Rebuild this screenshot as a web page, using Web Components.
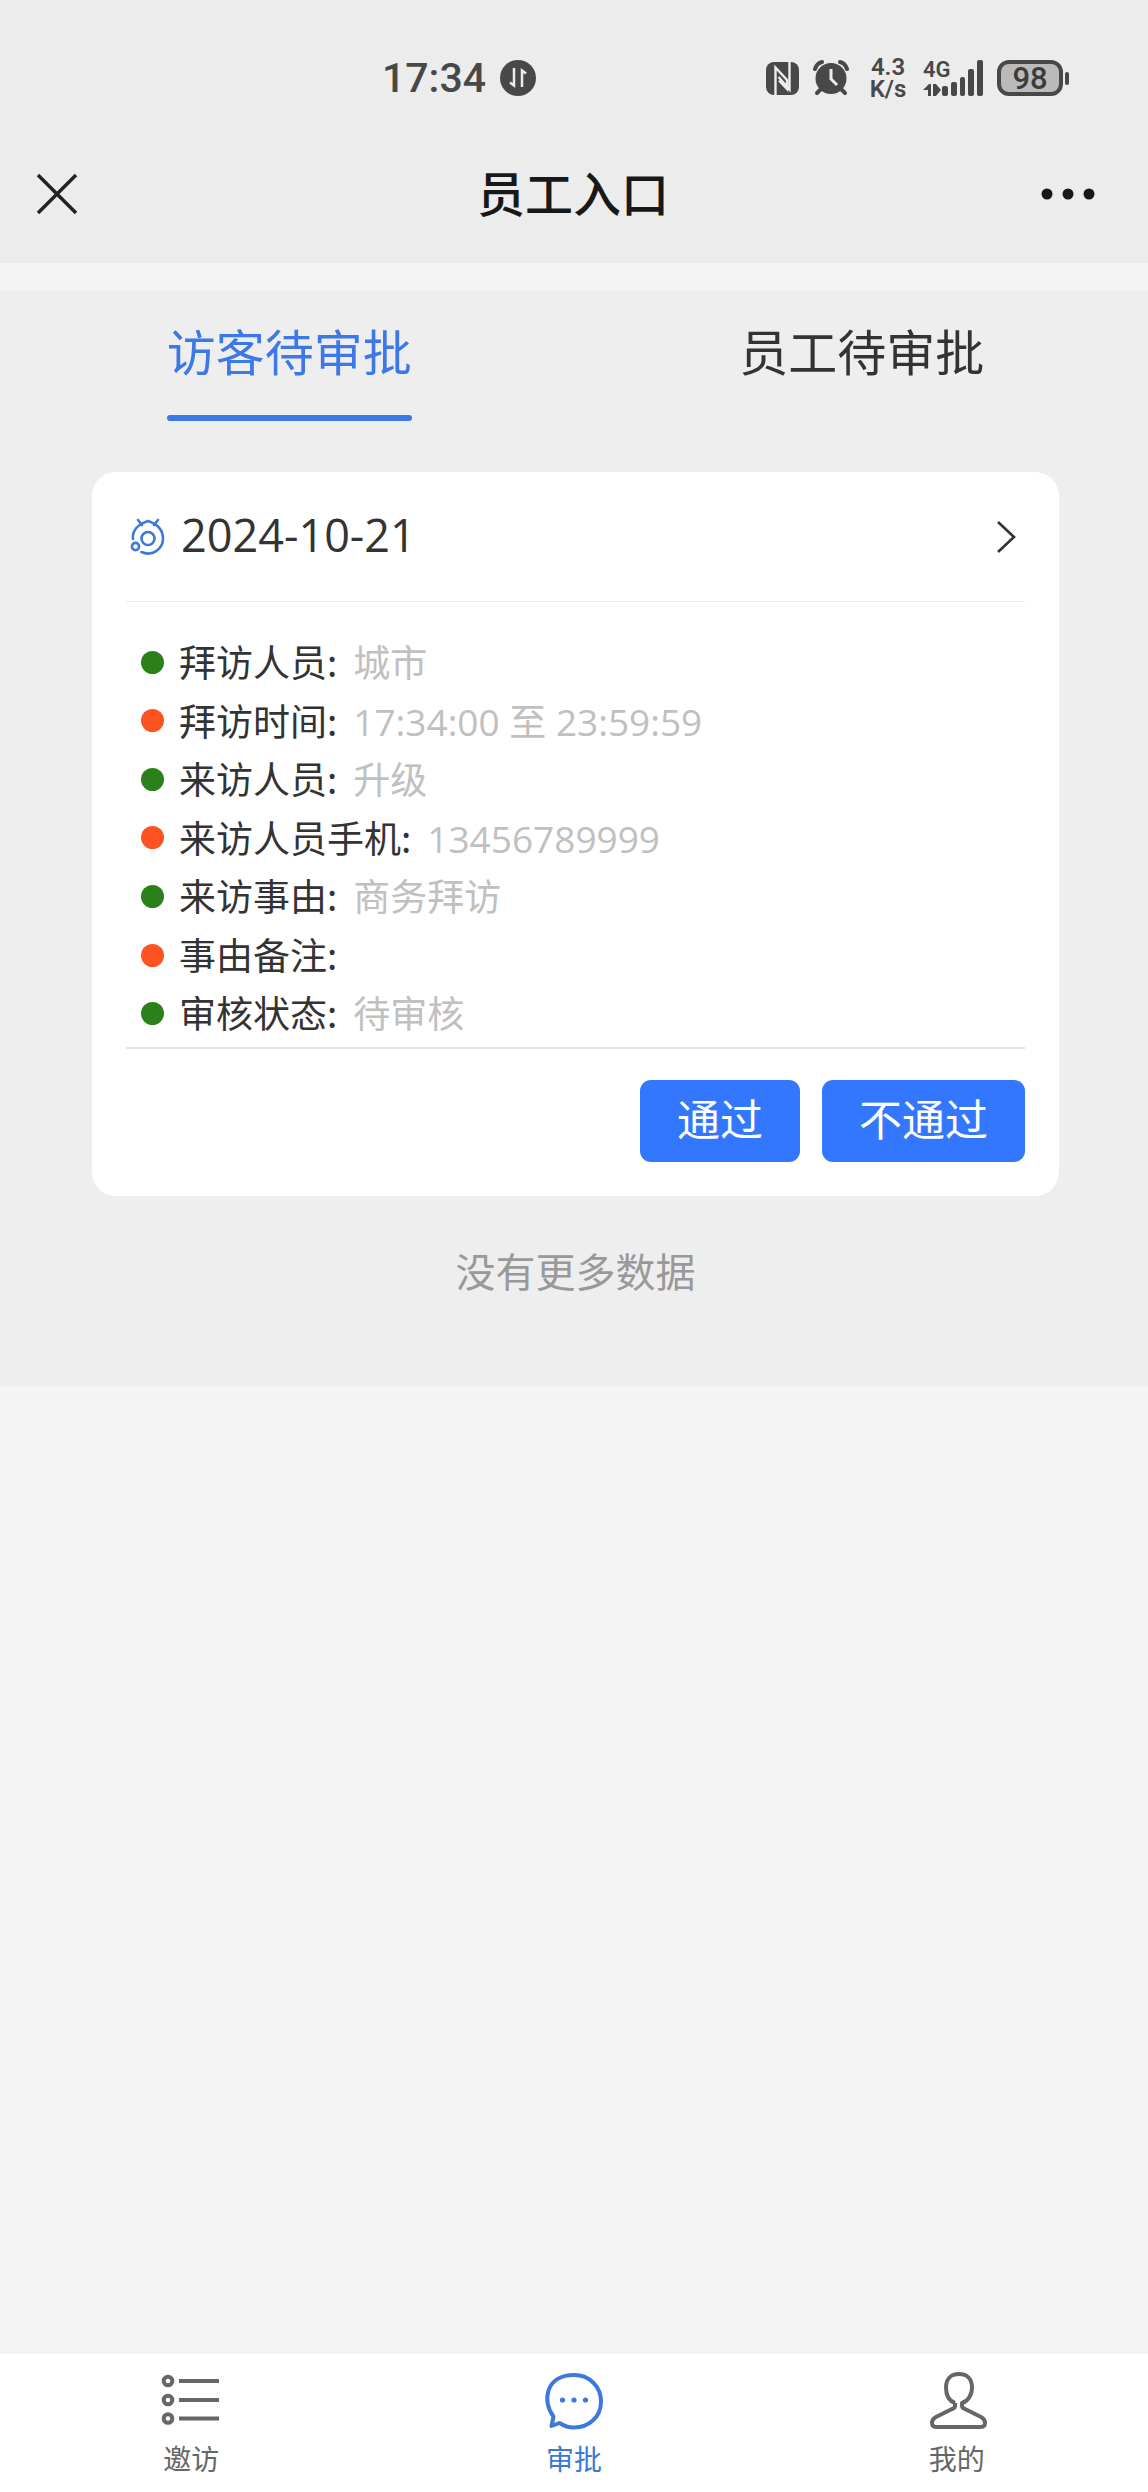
<!DOCTYPE html>
<html lang="zh-CN">
<head>
<meta charset="utf-8">
<meta name="viewport" content="width=device-width, initial-scale=1">
<title>员工入口</title>
<style>
  html, body { margin: 0; min-height: 100%; }
  body { background: #f4f4f4; font-family: "Noto Sans CJK SC", "Noto Sans", sans-serif; color: #333; }
</style>
</head>
<body>
<visitor-app></visitor-app>

<script>
const define = (name, html, setup) => {
  const template = document.createElement('template');
  template.innerHTML = html;
  customElements.define(name, class extends HTMLElement {
    constructor() {
      super();
      this.attachShadow({ mode: 'open' }).append(template.content.cloneNode(true));
    }
    connectedCallback() { if (setup) setup(this, this.shadowRoot); }
  });
};

define('status-bar', `
<style>
  :host { display: flex; justify-content: space-between; align-items: center; height: 156px; box-sizing: border-box;
    padding: 0 79px 0 382px; background: #ececec; color: #484848; font-family: Roboto, sans-serif; font-weight: 500; }
  .left, .right { display: flex; align-items: center; }
  .left { gap: 14px; }
  .clock { font-size: 41px; line-height: 48px; }
  svg { display: block; }
  .alarm { margin-left: 14px; }
  .speed { margin-left: 18px; width: 42px; text-align: center; font-size: 24px; line-height: 22px; font-weight: 600; }
  .signal { margin-left: 14px; }
  .battery { margin-left: 14px; width: 66px; height: 36px; box-sizing: border-box; border: 4px solid #484848; border-radius: 12px;
    background: #bababa; font-size: 31px; line-height: 29px; text-align: center; color: #3c3c3c; }
  .nub { margin-left: 2px; width: 4px; height: 13px; border-radius: 2px; background: #484848; }
</style>
<div class="left">
  <span class="clock">17:34</span>
  <svg width="36" height="36" viewBox="0 0 36 36"><circle cx="18" cy="18" r="18" fill="#484848"/><path d="M14 8v17.500l-4-3M22 27V10.500l4 3" fill="none" stroke="#ececec" stroke-width="2.500"/></svg>
</div>
<div class="right">
  <svg width="33" height="33" viewBox="0 0 33 33"><rect width="33" height="33" rx="8" fill="#484848"/><path d="M9.500 33V5.500L21 18v9l-8-8.500M23.500 0v27.500L12.500 15" fill="none" stroke="#ececec" stroke-width="2.400"/></svg>
  <svg class="alarm" width="36" height="36" viewBox="0 0 36 36"><g fill="none" stroke="#484848" stroke-width="4" stroke-linecap="round"><path d="M2 9Q4 3 9 2M34 9Q32 3 27 2" /><path d="M8 29l-4 4M28 29l4 4"/></g><circle cx="18" cy="18.500" r="15.500" fill="#484848"/><path d="M18 9v10l6 6" fill="none" stroke="#ececec" stroke-width="3"/></svg>
  <div class="speed"><div>4.3</div><div>K/s</div></div>
  <svg class="signal" width="60" height="56" viewBox="0 -10 60 56"><g fill="#484848"><text x="0" y="17" font-size="22" font-weight="600" font-family="Roboto">4G</text><path d="M0 30l6-6h2v12H5v-6zM10 24h3l5 6-5 6h-3z"/><rect x="19" y="26" width="6" height="10" rx="2"/><rect x="28" y="22" width="6" height="14" rx="2"/><rect x="37" y="17" width="5" height="19" rx="2"/><rect x="45" y="9" width="6" height="27" rx="2"/><rect x="54" y="0" width="6" height="36" rx="2"/></g></svg>
  <div class="battery">98</div><div class="nub"></div>
</div>`);

define('nav-header', `
<style>
  :host { display: flex; align-items: center; justify-content: space-between; height: 107px; box-sizing: border-box;
    padding: 0 48px 31px 32px; background: #ececec; color: #181818; }
  .side { flex: 1; display: flex; }
  .end { justify-content: flex-end; }
  h1 { margin: 0; font-size: 48px; line-height: 64px; font-weight: 500; padding: 0 0 6px 14px; }
  button { all: unset; display: block; cursor: pointer; }
  svg { display: block; }
</style>
<div class="side"><button aria-label="关闭"><svg width="50" height="50" viewBox="0 0 50 50"><path d="M6 6l38 38M44 6L6 44" stroke="#222" stroke-width="3.500" fill="none"/></svg></button></div>
<h1><slot></slot></h1>
<div class="side end"><button aria-label="更多"><svg width="62" height="40" viewBox="0 0 62 40"><g fill="#181818"><circle cx="9" cy="20" r="5.500"/><circle cx="30" cy="20" r="5.500"/><circle cx="51" cy="20" r="5.500"/></g></svg></button></div>`);

define('tab-item', `
<style>
  :host { flex: 1; display: flex; justify-content: center; }
  button { all: unset; cursor: pointer; box-sizing: border-box; height: 130px; padding-top: 24px; font-size: 49px; line-height: 70px; color: #333; }
  span { display: block; }
  i { display: block; height: 6px; border-radius: 3px; margin-top: 30px; }
  :host([active]) button { color: #3c78e8; }
  :host([active]) i { background: #3c78e8; }
</style>
<button role="tab"><span><slot></slot></span><i></i></button>`);

define('info-row', `
<style>
  :host { display: flex; align-items: baseline; font-size: 37px; line-height: 56px; --dot: #2c8019; }
  :host([tone="orange"]) { --dot: #fd5320; }
  i { align-self: center; width: 23px; height: 23px; border-radius: 50%; background: var(--dot); margin-right: 15px; }
  .value { color: #c0c0c0; margin-left: 16px; font-family: "Open Sans", "Noto Sans CJK SC", sans-serif; }
</style>
<i></i><span class="label"></span><span class="value"><slot></slot></span>`,
(host, root) => { root.querySelector('.label').textContent = host.getAttribute('label') + ':'; });

define('action-button', `
<style>
  :host { display: block; }
  button { display: block; border: 0; margin: 0; border-radius: 11px; background: #3477ff; color: #fff; font: inherit;
    font-size: 43px; line-height: 62px; padding: 6px 37px 14px; cursor: pointer; }
</style>
<button type="button"><slot></slot></button>`);

define('visit-card', `
<style>
  :host { display: block; background: #fff; border-radius: 24px; padding: 0 34px 34px; }
  header { display: flex; align-items: center; height: 130px; box-sizing: border-box; border-bottom: 1px solid #ebebeb; padding: 0 9px 0 4px; }
  .date { flex: 1; margin-left: 15px; padding-bottom: 4px; font-family: "Open Sans", sans-serif; font-size: 45px; line-height: 60px; }
  svg { display: block; }
  .rows { display: grid; grid-auto-rows: 1fr; min-height: 410px; padding: 31px 0 4px 15px; border-bottom: 2px solid #e3e3e3; }
  footer { display: flex; justify-content: flex-end; gap: 22px; padding-top: 31px; }
</style>
<header>
  <svg width="36" height="38" viewBox="0 0 36 38"><g fill="none" stroke="#3c78e0" stroke-width="2.600" stroke-linecap="round"><circle cx="18" cy="20.500" r="6.500"/><circle cx="5.500" cy="28.500" r="3.600"/><path d="M3 21C2 12 9 6 18 3C27 6 33 12 33 20.500C33 31 22 39 11.500 34"/><path d="M8 2l4 5M28 2l-4 5"/></g></svg>
  <span class="date"></span>
  <svg width="20" height="32" viewBox="0 0 20 32"><path d="M2 1l16 15L2 31" fill="none" stroke="#333" stroke-width="2.600"/></svg>
</header>
<div class="rows"><slot></slot></div>
<footer><slot name="actions"></slot></footer>`,
(host, root) => { root.querySelector('.date').textContent = host.getAttribute('date'); });

define('bottom-item', `
<style>
  :host { flex: 1; color: #666; }
  :host([active]) { color: #3c78d8; }
  a { display: flex; flex-direction: column; align-items: center; color: inherit; text-decoration: none; font-size: 28px; line-height: 40px; padding-top: 16px; gap: 8px; }
</style>
<a href="#"><slot name="icon"></slot><span><slot></slot></span></a>`);

define('visitor-app', `
<style>
  :host { display: flex; flex-direction: column; min-height: 100vh; }
  .tabs { display: flex; padding-left: 3px; }
  main { margin-top: 28px; background: #eee; padding-bottom: 86px; }
  visit-card { margin: 51px 89px 0 92px; }
  .empty { margin: 44px 0 0; padding-left: 3px; text-align: center; color: #999; font-size: 40px; line-height: 60px; }
  nav { margin-top: auto; display: flex; height: 138px; background: #fff; }
  nav svg { display: block; }
</style>
<status-bar></status-bar>
<nav-header>员工入口</nav-header>
<main>
  <div class="tabs" role="tablist"><tab-item active>访客待审批</tab-item><tab-item>员工待审批</tab-item></div>
  <visit-card date="2024-10-21">
    <info-row label="拜访人员">城市</info-row>
    <info-row label="拜访时间" tone="orange">17:34:00 至 23:59:59</info-row>
    <info-row label="来访人员">升级</info-row>
    <info-row label="来访人员手机" tone="orange">13456789999</info-row>
    <info-row label="来访事由">商务拜访</info-row>
    <info-row label="事由备注" tone="orange"></info-row>
    <info-row label="审核状态">待审核</info-row>
    <action-button slot="actions">通过</action-button>
    <action-button slot="actions">不通过</action-button>
  </visit-card>
  <p class="empty">没有更多数据</p>
</main>
<nav>
  <bottom-item><svg slot="icon" width="60" height="60" viewBox="0 0 60 60"><g fill="none" stroke="#666" stroke-width="4"><circle cx="7" cy="11" r="4.300"/><circle cx="7" cy="30" r="4.300"/><circle cx="7" cy="48.500" r="4.300"/><path d="M18 11h40M18 30h40M18 48.500h40"/></g></svg>邀访</bottom-item>
  <bottom-item active><svg slot="icon" width="60" height="60" viewBox="0 0 60 60"><path d="M9.500 46.500C-2 32 1 5 30 5C46 5 57 17 57 31.500C57 47 45 57.500 30 57.500C25 57.500 20 56 15.500 53L7.500 56z" fill="none" stroke="#3c78e0" stroke-width="4" stroke-linejoin="round"/><g fill="#3c78e0"><circle cx="18.500" cy="30" r="2.600"/><circle cx="30" cy="30" r="2.600"/><circle cx="41.500" cy="30" r="2.600"/></g></svg>审批</bottom-item>
  <bottom-item><svg slot="icon" width="60" height="60" viewBox="0 0 60 60"><path d="M28 33V36Q28 38 25 39L9 47Q5 49 5 53Q5 57 10 57H53Q58 57 58 53Q58 49 54 47L38 39Q35 38 35 36V33C41 31 45 25 45 17.500C45 9 40 4 32 4C24 4 19 9 19 17.500C19 25 22 31 28 33" fill="none" stroke="#666" stroke-width="4" stroke-linejoin="round"/></svg>我的</bottom-item>
</nav>`);
</script>
</body>
</html>
